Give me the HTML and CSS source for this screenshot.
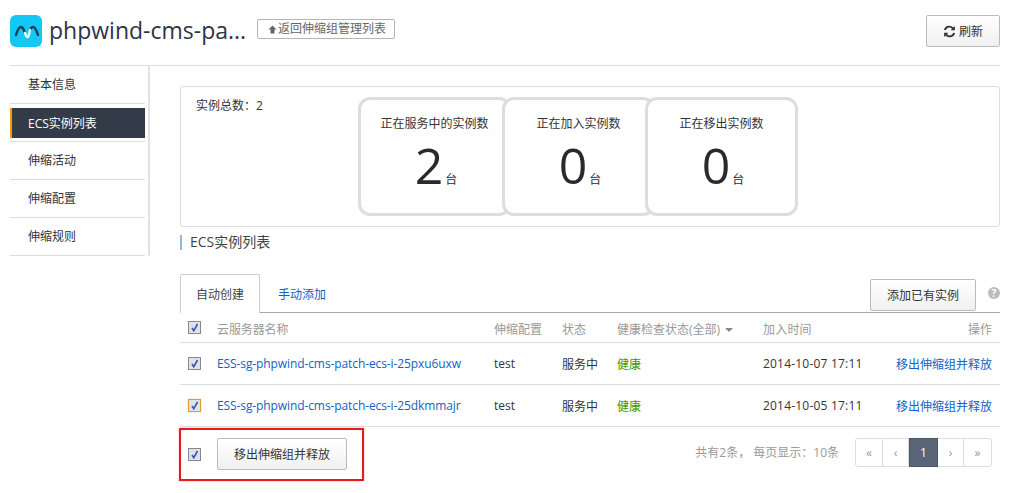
FILE: index.html
```html
<!DOCTYPE html>
<html lang="zh-CN">
<head>
  <meta charset="UTF-8">
  <title>ECS实例列表</title>
  <link rel="stylesheet" href="styles.css">
</head>
<body>
  <header class="top">
    <svg class="logo" viewBox="0 0 32 32" width="32" height="32">
      <rect width="32" height="32" rx="6" fill="#14c8f5"/>
      <path d="M6 20C7.500 15 9 12 11 12C13.500 12 14 16 15 18" fill="none" stroke="#17405a" stroke-width="2.400" stroke-linecap="round"/>
      <path d="M20 15C21 13 22 12 23 12C25.500 12 26.500 16 28 20" fill="none" stroke="#17405a" stroke-width="2.400" stroke-linecap="round"/>
      <path d="M15 18C16 21 17 22.500 18 22C19 21.500 19.500 17 20 15" fill="none" stroke="#e6fbff" stroke-width="2.400" stroke-linecap="round"/>
    </svg>
    <h1 class="title">phpwind-cms-pa...</h1>
    <a class="back-btn">
      <svg viewBox="0 0 9 9" width="9" height="9"><path d="M4.500 0.500 8.500 4.500H6.500V8.500H2.500V4.500H0.500Z" fill="#666"/></svg>返回伸缩组管理列表
    </a>
    <button class="btn refresh">
      <svg viewBox="0 0 14 14" width="13" height="13">
        <path d="M2 5.500A5 5 0 0 1 11 4" fill="none" stroke="#333" stroke-width="2"/>
        <path d="M12.800 1v4.600H8.200Z" fill="#333"/>
        <path d="M12 8.500A5 5 0 0 1 3 10" fill="none" stroke="#333" stroke-width="2"/>
        <path d="M1.200 13V8.400h4.600Z" fill="#333"/>
      </svg>
      刷新
    </button>
  </header>

  <div class="layout">
    <nav class="side">
      <a class="side-item">基本信息</a>
      <a class="side-item active"><span>ECS实例列表</span></a>
      <a class="side-item">伸缩活动</a>
      <a class="side-item">伸缩配置</a>
      <a class="side-item">伸缩规则</a>
    </nav>

    <main class="content">
      <section class="summary">
        <div class="total">实例总数：2</div>
        <div class="cards">
          <div class="card">
            <div class="card-label">正在服务中的实例数</div>
            <div class="card-num">2<small>台</small></div>
          </div>
          <div class="card">
            <div class="card-label">正在加入实例数</div>
            <div class="card-num">0<small>台</small></div>
          </div>
          <div class="card">
            <div class="card-label">正在移出实例数</div>
            <div class="card-num">0<small>台</small></div>
          </div>
        </div>
      </section>

      <h2 class="section-title">ECS实例列表</h2>

      <div class="tabs">
        <a class="tab current">自动创建</a>
        <a class="tab">手动添加</a>
        <div class="tab-tools">
          <button class="btn add">添加已有实例</button>
          <span class="help">?</span>
        </div>
      </div>

      <div class="row head">
        <div class="c-check"><span class="check"><svg viewBox="0 0 11 11"><path d="M3 6 4.800 8.800 8.500 2" fill="none" stroke="#3455a8" stroke-width="1.600"/></svg></span></div>
        <div class="c-name">云服务器名称</div>
        <div class="c-conf">伸缩配置</div>
        <div class="c-state">状态</div>
        <div class="c-health">健康检查状态(全部) <i class="caret"></i></div>
        <div class="c-time">加入时间</div>
        <div class="c-op">操作</div>
      </div>
      <div class="row">
        <div class="c-check"><span class="check"><svg viewBox="0 0 11 11"><path d="M3 6 4.800 8.800 8.500 2" fill="none" stroke="#3455a8" stroke-width="1.600"/></svg></span></div>
        <div class="c-name"><a>ESS-sg-phpwind-cms-patch-ecs-i-25pxu6uxw</a></div>
        <div class="c-conf">test</div>
        <div class="c-state">服务中</div>
        <div class="c-health ok">健康</div>
        <div class="c-time">2014-10-07 17:11</div>
        <div class="c-op"><a>移出伸缩组并释放</a></div>
      </div>
      <div class="row">
        <div class="c-check"><span class="check focus"><svg viewBox="0 0 11 11"><path d="M3 6 4.800 8.800 8.500 2" fill="none" stroke="#3455a8" stroke-width="1.600"/></svg></span></div>
        <div class="c-name"><a>ESS-sg-phpwind-cms-patch-ecs-i-25dkmmajr</a></div>
        <div class="c-conf">test</div>
        <div class="c-state">服务中</div>
        <div class="c-health ok">健康</div>
        <div class="c-time">2014-10-05 17:11</div>
        <div class="c-op"><a>移出伸缩组并释放</a></div>
      </div>

      <div class="foot">
        <div class="batch">
          <span class="check"><svg viewBox="0 0 11 11"><path d="M3 6 4.800 8.800 8.500 2" fill="none" stroke="#3455a8" stroke-width="1.600"/></svg></span>
          <button class="btn release">移出伸缩组并释放</button>
        </div>
        <div class="count">共有2条， 每页显示：10条</div>
        <div class="pager">
          <a>«</a><a>‹</a><a class="on">1</a><a>›</a><a>»</a>
        </div>
      </div>
    </main>
  </div>
</body>
</html>
```

FILE: styles.css
```css
* {
  box-sizing: border-box;
}

html, body {
  height: 493px;
  overflow: hidden;
}

body {
  margin: 0;
  padding: 15px 13px 0 10px;
  font-family: "Open Sans", "Noto Sans CJK SC", sans-serif;
  font-size: 12px;
  color: #333;
  background: #fff;
}

a {
  cursor: pointer;
}

.btn {
  font: inherit;
  color: #333;
  background: linear-gradient(#fff, #f0f0f0);
  border: 1px solid #bbb;
  border-radius: 2px;
  cursor: pointer;
}

/* 顶部 */
.top {
  display: flex;
  align-items: flex-start;
  height: 51px;
  border-bottom: 1px solid #ddd;
}

.logo {
  flex: none;
}

.title {
  margin: -1px 0 0 7px;
  width: 200px;
  font-size: 23px;
  line-height: 32px;
  font-weight: 400;
  color: #2b3648;
  white-space: nowrap;
}

.back-btn {
  display: flex;
  align-items: center;
  gap: 1px;
  width: 138px;
  height: 20px;
  margin: 4px 0 0 8px;
  padding-left: 10px;
  border: 1px solid #b5b5b5;
  border-radius: 2px;
  color: #666;
  line-height: 18px;
  white-space: nowrap;
}

.refresh {
  display: flex;
  align-items: center;
  justify-content: center;
  gap: 3px;
  width: 74px;
  height: 32px;
  margin-left: auto;
  padding: 0;
}

/* 左侧菜单 */
.layout {
  display: flex;
}

.side {
  flex: none;
  width: 140px;
  height: 190px;
  border-right: 2px solid #e2e2e2;
}

.side-item {
  display: flex;
  align-items: center;
  width: 135px;
  height: 38px;
  padding: 0 0 2px 18px;
  border-bottom: 1px solid #ddd;
  color: #333;
}

.side-item.active {
  padding: 4px 0 3px;
}

.side-item.active span {
  display: flex;
  align-items: center;
  width: 100%;
  height: 100%;
  padding: 0 0 1px 16px;
  border-left: 2px solid #f90;
  background: #333a48;
  color: #fff;
}

/* 右侧内容 */
.content {
  flex: 1;
  min-width: 0;
  padding: 20px 0 0 30px;
}

.summary {
  display: flex;
  height: 141px;
  padding: 10px 0 0 15px;
  border: 1px solid #ddd;
  border-radius: 3px;
}

.total {
  width: 162px;
  line-height: 17px;
}

.cards {
  display: flex;
}

.card {
  width: 153px;
  height: 119px;
  margin-right: -9px;
  padding-top: 15px;
  border: 3px solid #ddd;
  border-radius: 12px;
  background: #fff;
  text-align: center;
}

.card:nth-child(2) {
  margin-right: -10px;
}

.card-label {
  line-height: 18px;
}

.card-num {
  padding-left: 3px;
  font-size: 50px;
  line-height: 64px;
  color: #2a2a2a;
}

.card-num small {
  margin-left: 2px;
  font-size: 12px;
  line-height: 1;
}

.section-title {
  height: 15px;
  margin: 8px 0 0;
  padding-left: 8px;
  border-left: 2px solid #8cb8dd;
  font-size: 14px;
  line-height: 13px;
  font-weight: 400;
  color: #444;
}

/* 标签页 */
.tabs {
  display: flex;
  align-items: flex-end;
  height: 39px;
  margin-top: 24px;
  border-bottom: 1px solid #aaa;
}

.tab {
  display: flex;
  align-items: center;
  justify-content: center;
  width: 80px;
  height: 39px;
  margin-bottom: -1px;
  color: #0f62c6;
}

.tab.current {
  border: 1px solid #ccc;
  border-bottom: 0;
  border-radius: 2px 2px 0 0;
  background: #fff;
  color: #444;
}

.tab:nth-child(2) {
  width: 48px;
  margin-left: 18px;
}

.tab-tools {
  display: flex;
  align-items: center;
  gap: 12px;
  margin-left: auto;
  height: 39px;
  padding-top: 4px;
}

.add {
  width: 106px;
  height: 32px;
  padding: 0;
}

.help {
  width: 12px;
  height: 12px;
  margin-top: -4px;
  border-radius: 50%;
  background: #bbb;
  color: #fff;
  font-size: 10px;
  font-weight: 700;
  line-height: 12px;
  text-align: center;
}

/* 表格 */
.row {
  display: flex;
  align-items: center;
  height: 42px;
  border-bottom: 1px solid #ddd;
}

.row.head {
  height: 30px;
  padding-top: 2px;
  color: #999;
}

.row.head .c-check {
  margin-top: -2px;
}

.c-check {
  display: flex;
  width: 37px;
  padding-left: 8px;
}

.c-name {
  width: 277px;
  letter-spacing: -0.1px;
}

.c-name a,
.c-op a {
  color: #0f62c6;
}

.c-conf {
  width: 68px;
}

.c-state {
  width: 55px;
}

.c-health {
  width: 146px;
}

.ok {
  color: #3a9a00;
}

.caret {
  display: inline-block;
  margin-left: 2px;
  border: 4px solid transparent;
  border-top: 4px solid #888;
  border-bottom: 0;
  vertical-align: 2px;
}

.c-time {
  width: 110px;
  letter-spacing: 0.2px;
}

.c-op {
  flex: 1;
  padding-right: 8px;
  text-align: right;
}

.check {
  display: block;
  flex: none;
  width: 13px;
  height: 13px;
  border: 1px solid #888;
  background: #dfe2ea;
}

.check svg {
  display: block;
  width: 11px;
  height: 11px;
}

.check.focus {
  border-color: #e0a030;
  box-shadow: 0 0 1px #e0a030;
}

/* 底部 */
.foot {
  display: flex;
  align-items: flex-start;
  padding-top: 1px;
}

.batch {
  display: flex;
  align-items: center;
  gap: 16px;
  width: 185px;
  height: 53px;
  margin-left: -1px;
  padding: 0 0 1px 7px;
  border: 2px solid #e81a1a;
  box-shadow: 0 0 1px #f66;
}

.release {
  width: 130px;
  height: 32px;
  padding: 0;
}

.count {
  margin-left: auto;
  margin-top: 16px;
  color: #999;
  line-height: 17px;
}

.pager {
  display: flex;
  height: 29px;
  margin: 10px 8px 0 16px;
  border: 1px solid #ddd;
  border-radius: 3px;
}

.pager a {
  display: flex;
  align-items: center;
  justify-content: center;
  width: 26px;
  border-right: 1px solid #ddd;
  color: #999;
}

.pager a:first-child,
.pager a:last-child {
  width: 27px;
}

.pager a:last-child {
  border-right: 0;
}

.pager a.on {
  width: 29px;
  margin: -1px 0;
  border: 1px solid #4c5566;
  background: #5a6577;
  color: #fff;
}
```
